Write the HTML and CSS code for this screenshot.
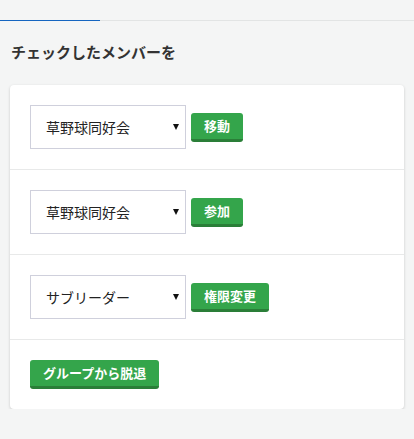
FILE: index.html
```html
<!DOCTYPE html>
<html lang="ja">

<head>
    <meta charset="UTF-8">
    <meta name="viewport" content="width=device-width, initial-scale=1.0">
    <title>メンバー管理</title>
    <link rel="stylesheet" href="styles.css">
</head>

<body>
    <div class="tabs">
        <div class="tab active"></div>
    </div>

    <h2 class="heading">チェックしたメンバーを</h2>

    <div class="card">
        <div class="row">
            <div class="select-wrap">
                <select class="select">
                    <option>草野球同好会</option>
                </select>
            </div>
            <button class="btn">移動</button>
        </div>
        <div class="row">
            <div class="select-wrap">
                <select class="select">
                    <option>草野球同好会</option>
                </select>
            </div>
            <button class="btn">参加</button>
        </div>
        <div class="row">
            <div class="select-wrap">
                <select class="select">
                    <option>サブリーダー</option>
                </select>
            </div>
            <button class="btn">権限変更</button>
        </div>
        <div class="row last">
            <button class="btn">グループから脱退</button>
        </div>
    </div>
</body>

</html>
```

FILE: styles.css
```css
body {
    margin: 0;
    background-color: #f4f5f5;
    font-family: "Noto Sans CJK JP", "Noto Sans", sans-serif;
    color: #333;
}

.tabs {
    display: flex;
    border-bottom: 1px solid #e2e4e4;
}

.tab {
    width: 100px;
    height: 20px;
    margin-bottom: -1px;
}

.tab.active {
    border-bottom: 1px solid #1565c0;
}

.heading {
    margin: 21px 11px 23px;
    font-size: 15px;
    line-height: 20px;
    font-weight: bold;
    color: #333;
}

.card {
    margin: 0 10px;
    background-color: #fff;
    border-radius: 4px;
    box-shadow: 0 1px 3px rgba(0, 0, 0, 0.18);
}

.row {
    display: flex;
    align-items: center;
    gap: 5px;
    padding: 20px;
    border-bottom: 1px solid #e8e9e9;
}

.row.last {
    border-bottom: none;
}

.select-wrap {
    position: relative;
}

.select-wrap::after {
    content: "";
    position: absolute;
    right: 7px;
    top: 19px;
    border-left: 3px solid transparent;
    border-right: 3px solid transparent;
    border-top: 6px solid #111;
    pointer-events: none;
}

.select {
    appearance: none;
    -webkit-appearance: none;
    display: block;
    width: 156px;
    height: 44px;
    padding: 0 20px 0 15px;
    border: 1px solid #cfd0dc;
    border-radius: 0;
    background-color: #fff;
    font-family: inherit;
    font-size: 14px;
    color: #222;
}

.btn {
    height: 29px;
    padding: 0 13px;
    border: none;
    border-bottom: 3px solid #2a7e38;
    border-radius: 3px;
    background-color: #34a54b;
    color: #fff;
    font-family: inherit;
    font-size: 13px;
    font-weight: bold;
    line-height: 26px;
}
```
